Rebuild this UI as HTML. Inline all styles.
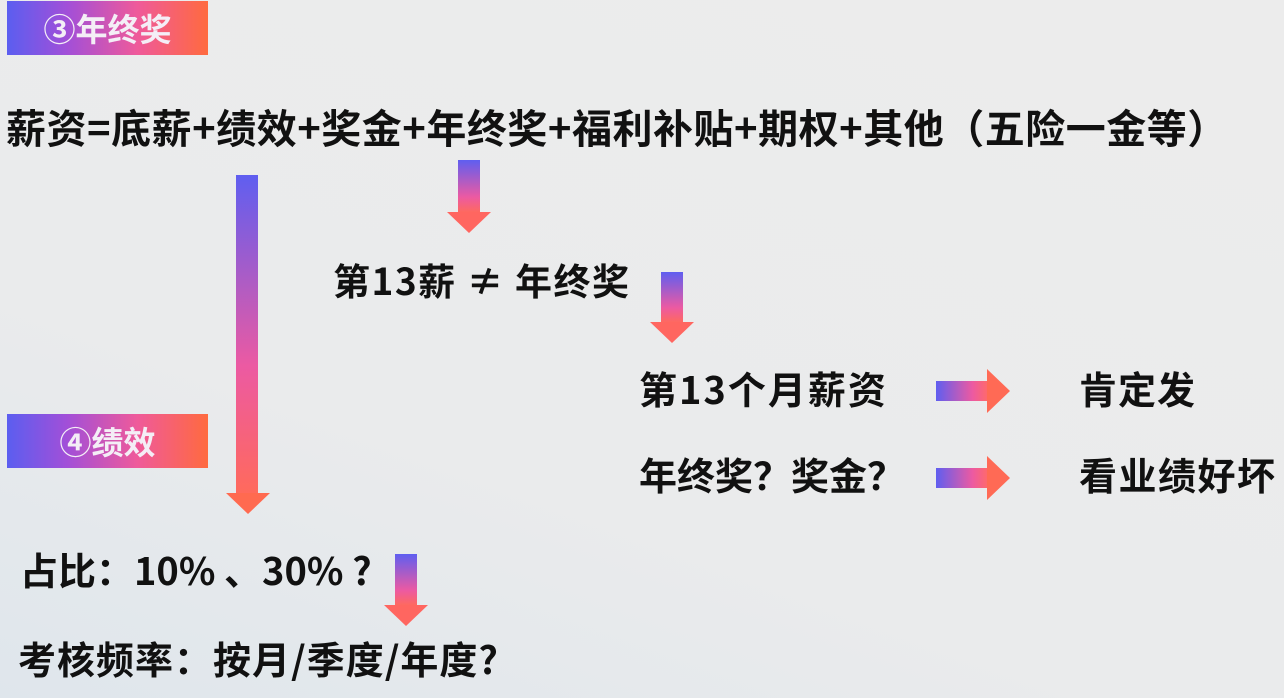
<!DOCTYPE html>
<html><head><meta charset="utf-8"><style>
html,body{margin:0;padding:0}
body{width:1284px;height:698px;overflow:hidden;position:relative;
background:linear-gradient(20deg,#dfe6ec 0%,#eaebec 35%,#ececec 100%);
font-family:"Noto Sans CJK SC","Liberation Sans",sans-serif;font-weight:bold;color:#111}
.t{position:absolute;white-space:pre;line-height:1}
.badge{position:absolute;left:7px;width:201px;height:54px;
background:linear-gradient(90deg,#5b5ef0 0%,#a24fd8 30%,#ef5a9a 65%,#ff6a3f 100%);
color:#f4eef6;font-size:32px;line-height:54px;text-align:center}
.vs{position:absolute;width:22px;background:linear-gradient(180deg,#5f5ef0,#ec5aa2 70%,#ff6a5c)}
.vh{position:absolute;width:0;height:0;border-left:22px solid transparent;border-right:22px solid transparent;border-top:21px solid #ff6660}
.hs{position:absolute;height:20px;width:52px;background:linear-gradient(90deg,#5f5ef0,#ec5aa2 70%,#ff6a6a)}
.hh{position:absolute;width:0;height:0;border-top:22px solid transparent;border-bottom:22px solid transparent;border-left:23px solid #ff6a55}
</style></head><body>
<div class="badge" style="top:1px">③年终奖</div>
<div class="badge" style="top:414px">④绩效</div>

<div class="t" style="left:6px;top:106px;font-size:40px;letter-spacing:0.5px">薪资=底薪+绩效+奖金+年终奖+福利补贴+期权+其他（五险一金等）</div>

<div class="vs" style="left:458px;top:160px;height:53px"></div>
<div class="vh" style="left:447px;top:212px"></div>

<div class="t" style="left:333px;top:261px;font-size:37px;letter-spacing:1.5px">第13薪 ≠ 年终奖</div>

<div class="vs" style="left:661px;top:272px;height:51px"></div>
<div class="vh" style="left:650px;top:322px"></div>

<div class="t" style="left:639px;top:369px;font-size:38px;letter-spacing:2px">第13个月薪资</div>
<div class="hs" style="left:936px;top:381px"></div>
<div class="hh" style="left:987px;top:369px"></div>
<div class="t" style="left:1079px;top:369px;font-size:38px;letter-spacing:1px">肯定发</div>

<div class="t" style="left:639px;top:455px;font-size:38px">年终奖？奖金？</div>
<div class="hs" style="left:936px;top:468px"></div>
<div class="hh" style="left:987px;top:456px"></div>
<div class="t" style="left:1079px;top:455px;font-size:38px;letter-spacing:1.5px">看业绩好坏</div>

<div class="vs" style="left:236px;top:175px;height:319px;background:linear-gradient(180deg,#5f5ef0,#ec5aa2 60%,#ff6a5c)"></div>
<div class="vh" style="left:226px;top:493px;border-top-color:#ff6a50"></div>

<div class="t" style="left:20px;top:550px;font-size:38px">占比：10% 、30% ?</div>
<div class="vs" style="left:395px;top:554px;height:52px"></div>
<div class="vh" style="left:384px;top:605px"></div>

<div class="t" style="left:18px;top:639px;font-size:38px;letter-spacing:1px">考核频率：按月/季度/年度?</div>
</body></html>
